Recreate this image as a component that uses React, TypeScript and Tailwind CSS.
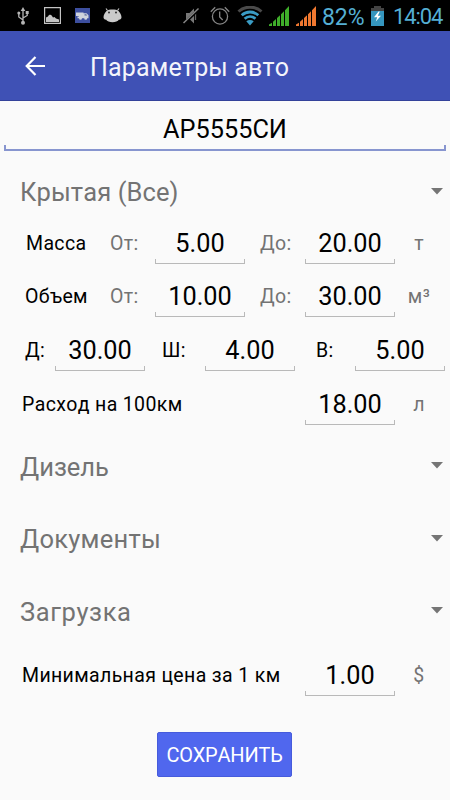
import { useState } from "react";
import type { ReactNode } from "react";

type FieldProps = {
  initial: string;
  className?: string;
};

function NumberField({ initial, className = "w-[90px]" }: FieldProps) {
  const [value, setValue] = useState(initial);

  return (
    <div className={`relative h-[50px] shrink-0 ${className}`}>
      <input
        value={value}
        onChange={(e) => setValue(e.target.value)}
        className="h-[50px] w-full bg-transparent pt-[9px] text-center text-[25.3px] leading-[41px] text-black outline-none"
      />
      <span className="pointer-events-none absolute inset-x-0 bottom-0 h-[5px] border-x border-b border-[#b9b9b9]" />
    </div>
  );
}

function Row({ children, className = "h-[53.7px]" }: { children: ReactNode; className?: string }) {
  return <div className={`flex items-end pb-[3px] ${className}`}>{children}</div>;
}

function Label({ children, className }: { children: ReactNode; className: string }) {
  return <span className={`h-[50px] shrink-0 whitespace-nowrap text-[19.5px] leading-[59px] tracking-[0.360px] ${className}`}>{children}</span>;
}

function Spinner({ text, className = "h-[72.7px] pt-[2px]", textClassName = "" }: { text: string; className?: string; textClassName?: string }) {
  return (
    <button type="button" className={`flex w-full items-center justify-between pr-[7px] pl-[20px] ${className}`}>
      <span className={`pt-[3px] text-[25.5px] leading-[32px] text-[#737373] ${textClassName}`}>{text}</span>
      <svg className="mt-px" width="12" height="7" viewBox="0 0 12 7" fill="#757575">
        <path d="M0 0h12L6 6.6z" />
      </svg>
    </button>
  );
}

function SignalIcon({ color }: { color: string }) {
  return (
    <svg width="20" height="20" viewBox="0 0 20 20" fill={color}>
      <path d="M0 20v-1.500l3-1.800V20zM4 20v-4.300l3-2.600V20zM8 20v-8l3-2.800V20zM12 20V8.200l3-2.900V20zM16 20V4.200L20 0v20z" />
    </svg>
  );
}

function StatusBar() {
  return (
    <div className="flex h-[31px] items-center bg-black">
      <svg className="ml-[17px]" width="12" height="18" viewBox="0 0 12 18" fill="none" stroke="#b5b5b5" strokeWidth="1.300">
        <path d="M6 16V3M6 13L1.800 10V6M6 11l4.200-2.500V5" />
        <path d="M6 0l2.300 4H3.700z" fill="#b5b5b5" stroke="none" />
        <circle cx="1.800" cy="6" r="1.500" fill="#b5b5b5" stroke="none" />
        <path d="M8.700 4h3v3h-3z" fill="#b5b5b5" stroke="none" />
        <circle cx="6" cy="15.800" r="2" fill="#b5b5b5" stroke="none" />
      </svg>
      <svg className="ml-[15px]" width="17" height="17" viewBox="0 0 17 17">
        <path d="M.6.600h15.800v15.800H.6z" fill="none" stroke="#c4c4c4" strokeWidth="1.200" />
        <path d="M2 15v-4.500l2-1c.7-2 3-2.200 4-.5l1 1.500 1.500-.5 1.500 1.500 3 1V15z" fill="#c4c4c4" />
      </svg>
      <svg className="ml-[14px]" width="15" height="15" viewBox="0 0 15 15">
        <path d="M0 0h15v15H0z" fill="#3d4f9f" />
        <path d="M1 4.500h7.500v.8h3l2 2v3h-1.300a1.500 1.500 0 0 1-3 0H7a1.500 1.500 0 0 1-3 0H2.500V8.500H4V8H1z" fill="#d0d4dc" />
        <path d="M9.500 6.300h1.700l1 1.300H9.500z" fill="#56649c" />
      </svg>
      <svg className="ml-[13px]" width="19" height="15" viewBox="0 0 19 15">
        <path d="M4.500 2.500L3 .5M14.500 2.500L16 .5" stroke="#cacaca" strokeWidth="1.100" />
        <path d="M3.500 3C5 1.800 7 1.400 9.500 1.400S14 1.800 15.500 3c1.300 1.500 3 4 3 6.300 0 1.700-1.500 2.500-2.500 2.300-1 1.800-3.700 2.700-6.500 2.700s-5.500-.9-6.500-2.700C2 11.800.5 11 .5 9.300.5 7 2.200 4.500 3.500 3z" fill="#cacaca" />
        <circle cx="6" cy="4.500" r=".9" fill="#222" />
        <circle cx="13" cy="4.500" r=".9" fill="#222" />
      </svg>
      <svg className="ml-[61px]" width="17" height="18" viewBox="0 0 17 18">
        <path d="M3 6h3.500L11 1.500v15L6.500 12H3z" fill="#777" />
        <path d="M12.500 5v8" stroke="#666" strokeWidth="1.300" />
        <path d="M1 16.500L16 2" stroke="#000" strokeWidth="3" />
        <path d="M.5 16L15.500 1.500" stroke="#858585" strokeWidth="1.500" />
      </svg>
      <svg className="ml-[10px]" width="20" height="20" viewBox="0 0 20 20" fill="none" stroke="#858585" strokeWidth="1.300">
        <circle cx="10" cy="10.500" r="7.600" />
        <path d="M9.700 5.500v5.500l3 3M.8 5.800L5.200 1.200M19.200 5.800l-4.400-4.600" />
      </svg>
      <svg className="ml-[7px]" width="26" height="20" viewBox="0 0 26 20" fill="none">
        <path d="M1.500 5.500C8-.3 18-.3 24.500 5.500" stroke="#4a4a4a" strokeWidth="3" />
        <path d="M4.700 9.200c4.800-4.300 11.800-4.300 16.600 0M7.600 12.700c3.200-2.900 7.600-2.900 10.800 0" stroke="#3a9cc5" strokeWidth="2.800" />
        <path d="M9.300 15.200c2.100-1.700 5.300-1.700 7.400 0L13 19.600z" fill="#3a9cc5" />
      </svg>
      <div className="ml-[6px] flex gap-[7px]">
        <SignalIcon color="#3fae2a" />
        <SignalIcon color="#f07830" />
      </div>
      <span className="ml-[6px] w-[43px] pt-[4px] text-[23px] leading-[28px] tracking-[-0.100px] whitespace-nowrap text-[#55afd4]">82%</span>
      <svg className="ml-[6px]" width="13" height="20" viewBox="0 0 13 20">
        <path d="M0 2h3V0h7v2h3v5H0z" fill="#444" />
        <path d="M0 5h13v15H0z" fill="#3596bf" />
        <path d="M7.500 5.500L3 11.300h3.200l-1.400 4.200L10 9.700H6.800l2-4.200z" fill="#fff" />
      </svg>
      <span className="ml-[9px] pt-[3px] text-[22px] leading-[28px] tracking-[-1.100px] whitespace-nowrap text-[#55afd4]">14:04</span>
    </div>
  );
}

function AppBar() {
  return (
    <header className="flex h-[70px] items-center border-b border-[#34429a] bg-[#3f51b5]">
      <button type="button" aria-label="Назад" className="ml-[25px]">
        <svg width="21" height="20" viewBox="0 0 21 20" fill="none" stroke="#fff" strokeWidth="2.200">
          <path d="M20 10H2M10.500 1L1.700 10l8.800 9" />
        </svg>
      </button>
      <h1 className="ml-[44px] pt-[5px] text-[25px] leading-[32px] tracking-[0.180px] whitespace-nowrap text-[#f4f5fb]">Параметры авто</h1>
    </header>
  );
}

export default function App() {
  const [plate, setPlate] = useState("АР5555СИ");

  return (
    <div className="flex h-[800px] w-[450px] flex-col overflow-hidden bg-[#fafafa] font-[Roboto,sans-serif] text-black [font-kerning:none]">
      <StatusBar />
      <AppBar />
      <main className="flex flex-col">
        <div className="relative mx-[4px] h-[50px]">
          <input
            value={plate}
            onChange={(e) => setPlate(e.target.value)}
            className="h-[50px] w-full bg-transparent pt-[6px] text-center text-[25.3px] leading-[44px] outline-none"
          />
          <span className="pointer-events-none absolute inset-x-0 bottom-0 h-[6px] border-x-2 border-b-2 border-[#8795cf]" />
        </div>
        <Spinner text="Крытая (Все)" className="mt-[17px] h-[45px]" textClassName="tracking-[0.1px]" />
        <Row>
          <Label className="w-[110px] pl-[26px]">Масса</Label>
          <Label className="w-[45px] text-[#737373]">От:</Label>
          <NumberField initial="5.00" />
          <Label className="w-[60px] pl-[15px] text-[#737373]">До:</Label>
          <NumberField initial="20.00" />
          <Label className="w-[48px] text-center text-[#737373]">т</Label>
        </Row>
        <Row>
          <Label className="w-[110px] pl-[25px]">Объем</Label>
          <Label className="w-[45px] text-[#737373]">От:</Label>
          <NumberField initial="10.00" />
          <Label className="w-[60px] pl-[15px] text-[#737373]">До:</Label>
          <NumberField initial="30.00" />
          <Label className="w-[48px] text-center text-[#737373]">м³</Label>
        </Row>
        <Row>
          <Label className="w-[55px] pl-[25px]">Д:</Label>
          <NumberField initial="30.00" />
          <Label className="w-[60px] pl-[17px]">Ш:</Label>
          <NumberField initial="4.00" />
          <Label className="w-[60px] pl-[21px]">В:</Label>
          <NumberField initial="5.00" />
        </Row>
        <Row>
          <Label className="w-[305px] pl-[22px]">Расход на 100км</Label>
          <NumberField initial="18.00" />
          <Label className="w-[48px] text-center text-[#737373]">л</Label>
        </Row>
        <Spinner text="Дизель" />
        <Spinner text="Документы" textClassName="tracking-[0.25px]" />
        <Spinner text="Загрузка" textClassName="tracking-[0.6px]" />
        <Row className="h-[53px]">
          <Label className="w-[305px] pl-[22px]">Минимальная цена за 1 км</Label>
          <NumberField initial="1.00" />
          <Label className="w-[48px] text-center text-[#737373]">$</Label>
        </Row>
        <button
          type="button"
          className="mt-[33px] ml-[157px] h-[45px] w-[135px] rounded-[2px] border border-[#465bdc] bg-[#5067ee] pt-[2px] text-[20px] tracking-[-0.2px] whitespace-nowrap text-white"
        >
          СОХРАНИТЬ
        </button>
      </main>
    </div>
  );
}
